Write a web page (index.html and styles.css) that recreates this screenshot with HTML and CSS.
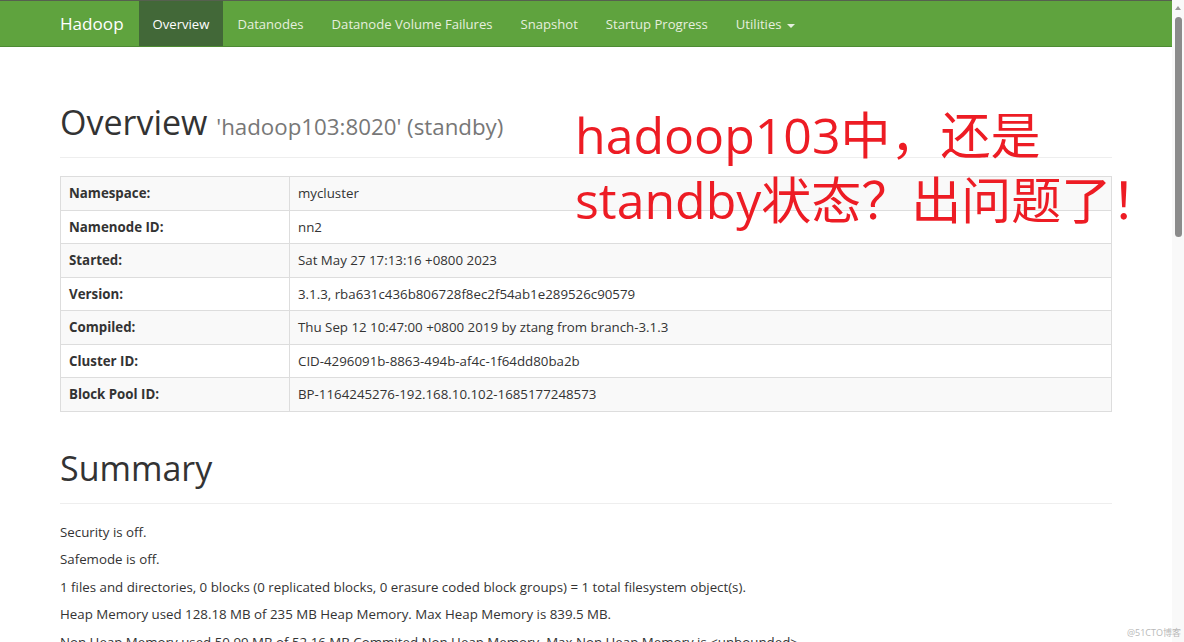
FILE: index.html
```html
<!DOCTYPE html>
<html lang="en">
<head>
<meta charset="utf-8">
<title>Namenode information</title>
<link rel="stylesheet" href="styles.css">
</head>
<body>
<div class="viewport">
  <div class="page">
    <nav class="navbar">
      <div class="container nav-inner">
        <span class="brand">Hadoop</span>
        <ul class="nav">
          <li class="active"><a>Overview</a></li>
          <li><a>Datanodes</a></li>
          <li><a>Datanode Volume Failures</a></li>
          <li><a>Snapshot</a></li>
          <li><a>Startup Progress</a></li>
          <li><a>Utilities <span class="caret"></span></a></li>
        </ul>
      </div>
    </nav>

    <div class="container main">
      <div class="page-header first">
        <h1>Overview <small>'hadoop103:8020' (standby)</small></h1>
      </div>

      <table class="info">
        <tr><th>Namespace:</th><td>mycluster</td></tr>
        <tr><th>Namenode ID:</th><td>nn2</td></tr>
        <tr><th>Started:</th><td>Sat May 27 17:13:16 +0800 2023</td></tr>
        <tr><th>Version:</th><td>3.1.3, rba631c436b806728f8ec2f54ab1e289526c90579</td></tr>
        <tr><th>Compiled:</th><td>Thu Sep 12 10:47:00 +0800 2019 by ztang from branch-3.1.3</td></tr>
        <tr><th>Cluster ID:</th><td>CID-4296091b-8863-494b-af4c-1f64dd80ba2b</td></tr>
        <tr><th>Block Pool ID:</th><td>BP-1164245276-192.168.10.102-1685177248573</td></tr>
      </table>

      <div class="page-header second">
        <h1>Summary</h1>
      </div>

      <p>Security is off.</p>
      <p>Safemode is off.</p>
      <p>1 files and directories, 0 blocks (0 replicated blocks, 0 erasure coded block groups) = 1 total filesystem object(s).</p>
      <p>Heap Memory used 128.18 MB of 235 MB Heap Memory. Max Heap Memory is 839.5 MB.</p>
      <p>Non Heap Memory used 50.99 MB of 52.16 MB Commited Non Heap Memory. Max Non Heap Memory is &lt;unbounded&gt;.</p>
    </div>

    <div class="annotation">hadoop103中，还是<br>standby状态？出问题了！</div>
  </div>
  <div class="scrollbar"><span class="arrow"></span><span class="thumb"></span></div>
  <div class="watermark">@51CTO博客</div>
</div>
</body>
</html>
```

FILE: styles.css
```css
html, body {
  margin: 0;
  height: 100%;
  overflow: hidden;
}

body {
  font-family: "Open Sans", "Noto Sans CJK SC", sans-serif;
  font-size: 13.3px;
  color: #333;
  background: #fff;
}

.viewport {
  display: flex;
  height: 642px;
  position: relative;
}

.page {
  flex: 1;
  position: relative;
  overflow: hidden;
}

/* fake scrollbar */
.scrollbar {
  width: 12px;
  background: #f9f9f9;
  display: flex;
  flex-direction: column;
  align-items: center;
}

.arrow {
  margin-top: 6px;
  width: 0;
  height: 0;
  border-left: 3px solid transparent;
  border-right: 3px solid transparent;
  border-bottom: 4px solid #9a9a9a;
}

.thumb {
  margin-top: 7px;
  width: 7px;
  height: 220px;
  background: #8b8b8b;
  border-radius: 4px;
}

.watermark {
  position: absolute;
  right: 3px;
  bottom: 3px;
  font-size: 9px;
  color: #b8b8b8;
}

/* navbar */
.container {
  width: 1052px;
  margin: 0 auto;
}

.navbar {
  background: #5fa33e;
  border-top: 1px solid #56604f;
  border-bottom: 1px solid #4d8b33;
  height: 45px;
}

.nav-inner {
  display: flex;
  height: 100%;
}

.brand {
  font-size: 17.1px;
  color: #fff;
  padding-top: 1px;
  line-height: 44px;
  margin-right: 15px;
}

.nav {
  display: flex;
  list-style: none;
  margin: 0;
  padding: 0;
  font-size: 13.1px;
}

.nav a {
  display: block;
  padding: 1px 14px 0;
  line-height: 44px;
  color: #e6efdf;
}

.nav .active a {
  background: #426838;
  color: #fff;
}

.caret {
  display: inline-block;
  width: 0;
  height: 0;
  margin-left: 2px;
  vertical-align: middle;
  border-top: 4px solid #e6efdf;
  border-left: 4px solid transparent;
  border-right: 4px solid transparent;
}

/* content */
.page-header {
  border-bottom: 1px solid #eee;
  padding-bottom: 15px;
}

.page-header.first {
  margin-top: 55px;
}

.page-header.second {
  margin-top: 36px;
  margin-bottom: 18px;
}

h1 {
  margin: 0;
  font-size: 34px;
  line-height: 40px;
  font-weight: 400;
  color: #333;
}

h1 small {
  font-size: 22.3px;
  line-height: 1;
  color: #777;
  font-weight: 400;
}

.info {
  width: 100%;
  margin-top: 18px;
  border-collapse: collapse;
  border: 1px solid #ddd;
}

.info th,
.info td {
  border: 1px solid #ddd;
  padding: 7px 8px;
  line-height: 18.5px;
  text-align: left;
}

.info th {
  width: 212px;
  font-weight: 700;
}

.info tr:nth-child(odd) th,
.info tr:nth-child(odd) td {
  background: #f9f9f9;
}

p {
  margin: 0 0 7.6px;
  line-height: 20px;
}

/* red annotation over the page */
.annotation {
  position: absolute;
  left: 575px;
  top: 103px;
  font-size: 50px;
  line-height: 65px;
  color: #ed1c24;
  white-space: nowrap;
}
```
